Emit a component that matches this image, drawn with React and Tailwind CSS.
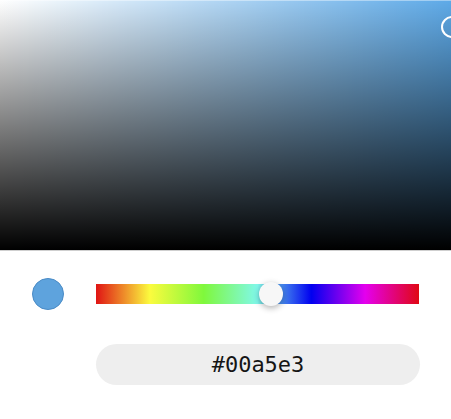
import React from 'react';

export default function App() {
  const hex = '#00a5e3';

  return (
    <div className="w-[451px] h-[419px] bg-white overflow-hidden">
      {/* saturation / value panel */}
      <div className="relative h-[251px] border-b border-[#cfcfcf] bg-[#5eaae8] overflow-hidden">
        <div className="absolute inset-0 bg-linear-to-r from-white to-transparent" />
        <div className="absolute inset-0 bg-linear-to-b from-transparent to-black" />
        <div className="absolute left-0 right-0 top-0 h-px bg-white/40" />
        <div className="absolute left-[441px] top-[16px] w-[22px] h-[22px] rounded-full border-2 border-white" />
      </div>

      {/* swatch + hue slider */}
      <div className="flex items-center gap-8 px-8 pt-[27px]">
        <div className="w-8 h-8 shrink-0 rounded-full bg-[#5ea3dd] border border-[#4a8bc6]" />
        <div className="relative flex-1 h-5 bg-[linear-gradient(to_right,#e01414,#fbfb3e,#7ff83c,#80f8ea,#0000f0,#e400ee,#e00814)]">
          <div className="absolute left-[163px] top-[-2px] w-6 h-6 rounded-full bg-[#f7f7f7] shadow-[0_2px_6px_rgba(0,0,0,0.3)]" />
        </div>
      </div>

      {/* hex input */}
      <div className="pl-24 pr-[31px] pt-[34px]">
        <div className="h-[41px] rounded-full bg-[#eeeeee] flex items-center justify-center">
          <span className="text-[22px] text-[#151515] font-['DejaVu_Sans_Mono',monospace]">{hex}</span>
        </div>
      </div>
    </div>
  );
}
